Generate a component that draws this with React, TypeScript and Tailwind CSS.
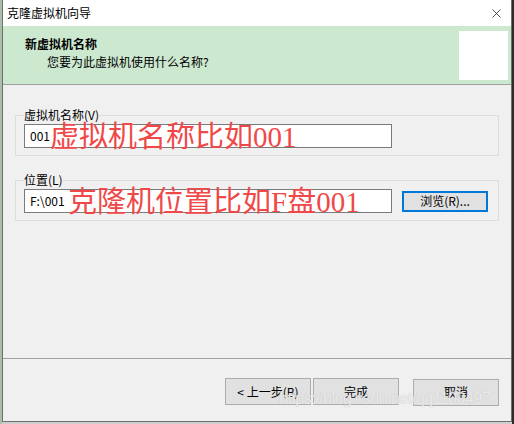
import { X } from "lucide-react";

const FONT = { fontFamily: '"Noto Sans CJK SC", "Noto Sans", sans-serif' };
const RED_FONT = { fontFamily: '"Liberation Serif", "Noto Sans CJK SC", serif' };

function WizardButton({ label }: { label: string }) {
  return (
    <button
      type="button"
      className="w-[86px] h-[27px] bg-[#e1e1e1] border border-[#adadad] text-[12px] text-black leading-none"
    >
      {label}
    </button>
  );
}

function Group({
  legend,
  value,
  note,
  noteOffset,
  withBrowse,
}: {
  legend: string;
  value: string;
  note: string;
  noteOffset: string;
  withBrowse?: boolean;
}) {
  return (
    <fieldset className="mx-[12px] border border-[#dcdcdc] px-[8px] pb-[7px] pt-[1px]">
      <legend className="text-[12px] leading-[16px] text-black">{legend}</legend>
      <div className="flex items-center gap-[10px]">
        <div className="relative w-[368px] h-[24px] bg-white border border-[#7a7a7a] flex items-center pl-[5px] text-[12px] text-black">
          {value}
          <span
            className={`absolute top-[-4px] text-[29px] leading-[32px] text-[#f04848] whitespace-nowrap ${noteOffset}`}
            style={RED_FONT}
          >
            {note}
          </span>
        </div>
        {withBrowse && (
          <button
            type="button"
            className="w-[86px] h-[21px] bg-[#e1e1e1] border-2 border-[#0078d7] text-[12px] leading-none text-black"
          >
            浏览(R)...
          </button>
        )}
      </div>
    </fieldset>
  );
}

export default function App() {
  return (
    <div className="w-[514px] h-[424px] flex bg-[#2c2c2c] overflow-hidden" style={FONT}>
      {/* strip of desktop left of the window */}
      <div className="w-[2px] h-[424px] bg-[#a9bfa9]" />

      <div className="flex flex-col">
        <div className="w-[510px] h-[422px] flex flex-col border-x border-b border-[#6f6f6f] bg-[#f0f0f0]">
          {/* Title bar */}
          <div className="h-[26px] bg-white flex items-center justify-between pl-[4px] pr-[7px]">
            <span className="text-[12px] text-black">克隆虚拟机向导</span>
            <X className="w-[15px] h-[15px] text-black" strokeWidth={1.1} />
          </div>

          {/* Header */}
          <div className="h-[59px] bg-[#cce8cf] border-b border-[#a0a0a0] flex justify-between pr-[3px]">
            <div className="pl-[22px] pt-[9px] text-[12px] leading-[17px] text-black">
              <div className="font-bold">新虚拟机名称</div>
              <div className="pl-[22px] mt-[1px]">您要为此虚拟机使用什么名称?</div>
            </div>
            <div className="mt-[5px] w-[49px] h-[49px] bg-white" />
          </div>

          {/* Body */}
          <div className="h-[274px] border-b border-[#a0a0a0] pt-[22px] flex flex-col gap-[16px]">
            <Group
              legend="虚拟机名称(V)"
              value="001"
              note="虚拟机名称比如001"
              noteOffset="left-[25px]"
            />
            <Group
              legend="位置(L)"
              value="F:\001"
              note="克隆机位置比如F盘001"
              noteOffset="left-[43px]"
              withBrowse
            />
          </div>

          {/* Footer */}
          <div className="relative flex-1 flex justify-end items-start pt-[19px] pr-[12px]">
            <div className="flex gap-[2px]">
              <WizardButton label="< 上一步(B)" />
              <WizardButton label="完成" />
            </div>
            <div className="ml-[14px]">
              <WizardButton label="取消" />
            </div>
            {/* csdn watermark laid over the buttons */}
            <span
              className="absolute left-[276px] top-[30px] text-[16px] leading-[20px] tracking-[-0.5px] text-white/70 whitespace-nowrap pointer-events-none"
              style={{ fontFamily: '"Liberation Sans", sans-serif', textShadow: "0 0 1px #b4b4b4" }}
            >
              https://blog.csdn.net/qq1100497
            </span>
          </div>
        </div>
        <div className="h-[2px] bg-[#cfcfcf]" />
      </div>
    </div>
  );
}
